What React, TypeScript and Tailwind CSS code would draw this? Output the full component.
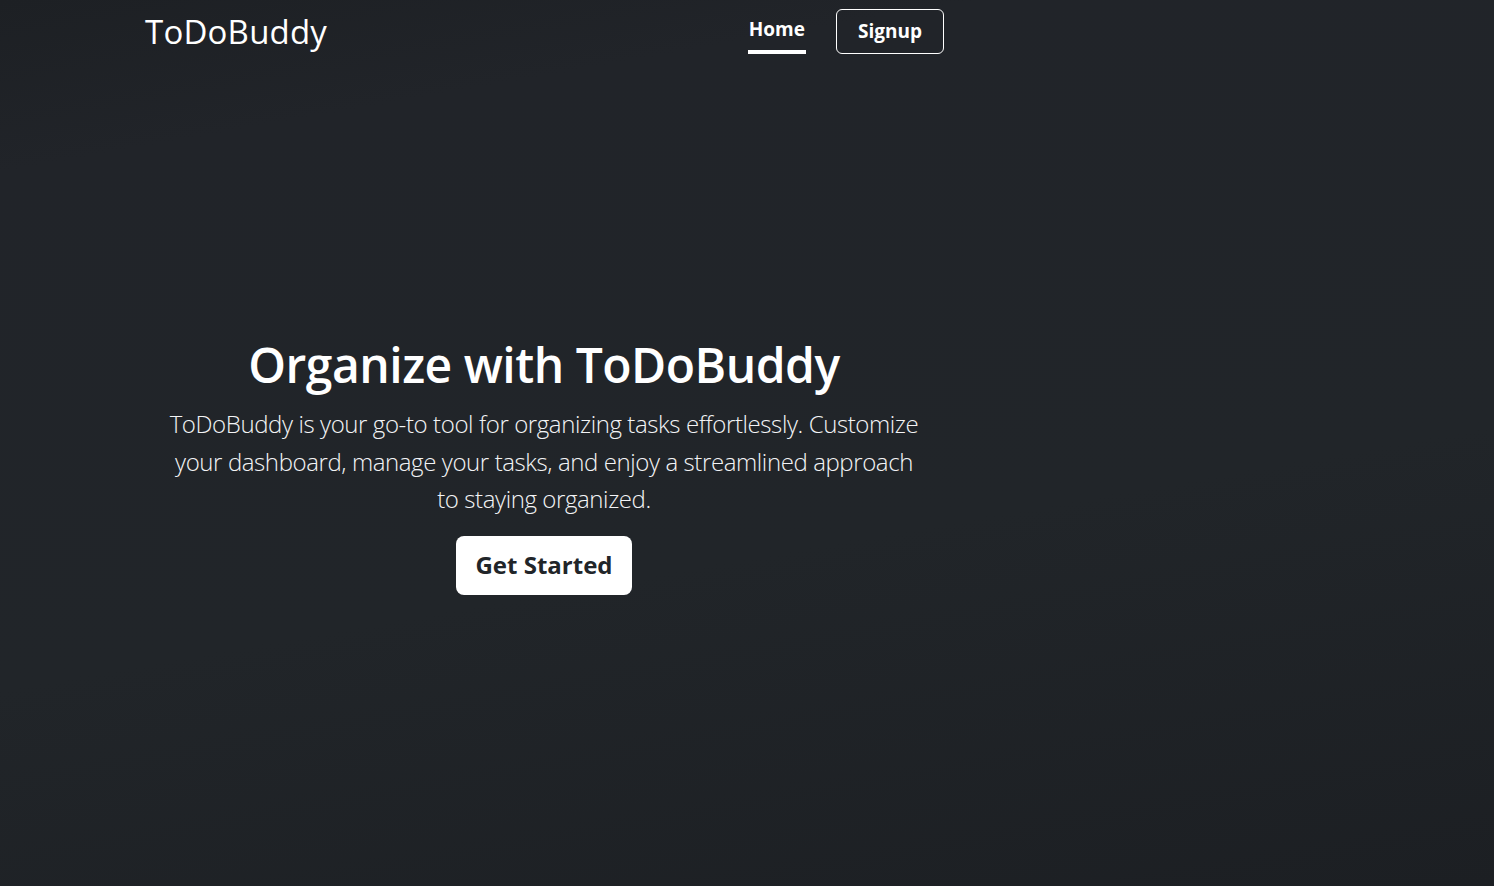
export default function App() {
  return (
    <div
      className="min-h-screen flex flex-col text-white bg-[linear-gradient(170deg,#1d2024_0%,#212429_15%,#212529_60%,#1c1f23_100%)]"
      style={{ fontFamily: '"Open Sans", "Noto Sans", sans-serif' }}
    >
      {/* Navbar */}
      <nav className="h-[62px] flex items-center">
        <div className="ml-[145px] w-[799px] flex items-center justify-between">
          <a href="#" className="text-[33px] font-medium leading-none tracking-[0.2px]">
            ToDoBuddy
          </a>
          <div className="flex items-center gap-[30px]">
            <a href="#" className="mt-[12px] flex flex-col items-stretch text-[19px] font-bold leading-none">
              <span className="px-[1px]">Home</span>
              <span className="mt-[11px] h-[4px] bg-white"></span>
            </a>
            <button className="h-[45px] w-[108px] rounded-[6px] border border-white text-[19px] font-bold">
              Signup
            </button>
          </div>
        </div>
      </nav>

      {/* Hero */}
      <main className="flex-1 flex items-center pb-[18px]">
        <div className="ml-[145px] w-[798px] flex flex-col items-center text-center px-3">
          <h1 className="text-[48px] font-semibold leading-tight tracking-[-0.5px]">
            Organize with ToDoBuddy
          </h1>
          <p className="mt-[10px] max-w-[756px] text-[24px] font-light leading-[37.5px] tracking-[-0.4px] text-gray-100">
            ToDoBuddy is your go-to tool for organizing tasks effortlessly. Customize your
            dashboard, manage your tasks, and enjoy a streamlined approach to staying organized.
          </p>
          <button className="mt-[18px] h-[59px] px-[19px] rounded-[8px] bg-white text-[#212529] text-[24px] font-bold">
            Get Started
          </button>
        </div>
      </main>
    </div>
  )
}
